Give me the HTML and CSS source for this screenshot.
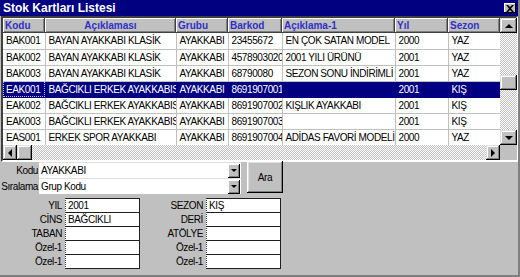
FILE: index.html
```html
<!DOCTYPE html>
<html lang="tr">
<head>
    <meta charset="UTF-8">
    <title>Stok Kartları Listesi</title>
    <link rel="stylesheet" href="styles.css">
</head>
<body>
<div class="window">
    <div class="titlebar">
        <span class="title">Stok Kartları Listesi</span>
        <span class="close">
            <svg width="8" height="7" viewBox="0 0 8 7"><path d="M0 0h2l2 2 2-2h2L5 3.5 8 7H6L4 5 2 7H0l3-3.5z" fill="#000"/></svg>
        </span>
    </div>

    <div class="gridpanel">
        <div class="tablewrap">
            <table class="grid">
                <colgroup>
                    <col class="c-kod"><col class="c-ack"><col class="c-grp"><col class="c-bar"><col class="c-ack1"><col class="c-yil"><col class="c-sez">
                </colgroup>
                <thead>
                    <tr>
                        <th>Kodu</th>
                        <th class="center">Açıklaması</th>
                        <th>Grubu</th>
                        <th>Barkod</th>
                        <th>Açıklama-1</th>
                        <th>Yıl</th>
                        <th>Sezon</th>
                    </tr>
                </thead>
                <tbody>
                    <tr><td>BAK001</td><td>BAYAN AYAKKABI KLASİK</td><td>AYAKKABI</td><td>23455672</td><td>EN ÇOK SATAN MODEL</td><td>2000</td><td>YAZ</td></tr>
                    <tr><td>BAK002</td><td>BAYAN AYAKKABI KLASİK</td><td>AYAKKABI</td><td>4578903020</td><td>2001 YILI ÜRÜNÜ</td><td>2001</td><td>YAZ</td></tr>
                    <tr><td>BAK003</td><td>BAYAN AYAKKABI KLASİK</td><td>AYAKKABI</td><td>68790080</td><td>SEZON SONU İNDİRİMLİ</td><td>2001</td><td>YAZ</td></tr>
                    <tr class="selected"><td class="focus">EAK001</td><td>BAĞCIKLI ERKEK AYAKKABISI</td><td>AYAKKABI</td><td>8691907001</td><td></td><td>2001</td><td>KIŞ</td></tr>
                    <tr><td>EAK002</td><td>BAĞCIKLI ERKEK AYAKKABISI</td><td>AYAKKABI</td><td>8691907002</td><td>KIŞLIK AYAKKABI</td><td>2001</td><td>KIŞ</td></tr>
                    <tr><td>EAK003</td><td>BAĞCIKLI ERKEK AYAKKABISI</td><td>AYAKKABI</td><td>8691907003</td><td></td><td>2001</td><td>KIŞ</td></tr>
                    <tr><td>EAS001</td><td>ERKEK SPOR AYAKKABI</td><td>AYAKKABI</td><td>8691907004</td><td>ADİDAS FAVORİ MODELİ</td><td>2000</td><td>YAZ</td></tr>
                </tbody>
            </table>
        </div>

        <div class="vscroll">
            <span class="sbtn"><i class="arrow up"></i></span>
            <span class="track vtrack"><span class="thumb vthumb"></span></span>
            <span class="sbtn"><i class="arrow down"></i></span>
        </div>
        <div class="hscroll">
            <span class="sbtn"><i class="arrow left"></i></span>
            <span class="thumb hthumb"></span>
            <span class="track htrack"></span>
            <span class="sbtn"><i class="arrow right"></i></span>
        </div>
        <div class="corner"></div>
    </div>

    <div class="search">
        <div class="search-rows">
            <div class="srow">
                <label>Kodu</label>
                <div class="combo"><span class="combo-text">AYAKKABI</span><span class="combo-btn"><i class="arrow down"></i></span></div>
            </div>
            <div class="srow">
                <label>Sıralama</label>
                <div class="combo"><span class="combo-text">Grup Kodu</span><span class="combo-btn"><i class="arrow down"></i></span></div>
            </div>
        </div>
        <button class="btn">Ara</button>
    </div>

    <div class="fields">
        <div class="fcol left">
            <div class="frow"><label>YIL</label><div class="edit">2001</div></div>
            <div class="frow"><label>CİNS</label><div class="edit">BAĞCIKLI</div></div>
            <div class="frow"><label>TABAN</label><div class="edit"></div></div>
            <div class="frow"><label>Özel-1</label><div class="edit"></div></div>
            <div class="frow"><label>Özel-1</label><div class="edit"></div></div>
        </div>
        <div class="fcol right">
            <div class="frow"><label>SEZON</label><div class="edit">KIŞ</div></div>
            <div class="frow"><label>DERİ</label><div class="edit"></div></div>
            <div class="frow"><label>ATÖLYE</label><div class="edit"></div></div>
            <div class="frow"><label>Özel-1</label><div class="edit"></div></div>
            <div class="frow"><label>Özel-1</label><div class="edit"></div></div>
        </div>
    </div>
</div>
</body>
</html>
```

FILE: styles.css
```css
body {
    margin: 0;
    font-family: "Liberation Sans", Arial, sans-serif;
    font-size: 10px;
    letter-spacing: -0.4px;
    color: #000;
    background: #c0c0c0;
}

.window {
    width: 520px;
    height: 277px;
    box-sizing: border-box;
    background: #c0c0c0;
    border-right: 2px solid #808080;
    border-bottom: 2px solid #808080;
    display: flex;
    flex-direction: column;
}

/* baslik cubugu */
.titlebar {
    height: 16px;
    background: #000080;
    color: #fff;
    display: flex;
    align-items: center;
    justify-content: space-between;
    padding: 0 2px 0 3px;
}

.title {
    font-weight: bold;
    font-size: 12px;
    letter-spacing: 0;
}

.close {
    width: 12px;
    height: 10px;
    background: #c0c0c0;
    box-shadow: inset -1px -1px #000, inset 1px 1px #fff;
    display: flex;
    align-items: center;
    justify-content: center;
}

/* tablo paneli */
.gridpanel {
    display: grid;
    grid-template-columns: 497px 17px;
    grid-template-rows: 127px 15px;
    border-style: solid;
    border-width: 2px;
    border-color: #404040 #fff #fff #404040;
    margin-left: 1px;
    background: #fff;
}

.tablewrap {
    overflow: hidden;
    background: #fff;
}

.grid {
    table-layout: fixed;
    border-collapse: collapse;
    width: 497px;
}

.c-kod { width: 42px; }
.c-ack { width: 131px; }
.c-grp { width: 52px; }
.c-bar { width: 54px; }
.c-ack1 { width: 113px; }
.c-yil { width: 53px; }
.c-sez { width: 52px; }

.grid th {
    height: 15px;
    box-sizing: border-box;
    padding: 0 2px;
    background: #c0c0c0;
    color: #3030c8;
    font-size: 10px;
    font-weight: bold;
    letter-spacing: 0;
    text-align: left;
    box-shadow: inset -1px -1px #404040, inset 1px 1px #fff, inset -2px -2px #808080;
    white-space: nowrap;
    overflow: hidden;
}

.grid th.center {
    text-align: center;
}

.grid td {
    height: 16px;
    box-sizing: border-box;
    padding: 0 3px;
    border-right: 1px solid #c0c0c0;
    border-bottom: 1px solid #c0c0c0;
    white-space: nowrap;
    overflow: hidden;
    text-overflow: clip;
}

.grid tr.selected td {
    background: #000080;
    color: #fff;
    border-color: #000080;
}

.grid tr.selected td.focus {
    outline: 1px dotted #c0c0ff;
    outline-offset: -1px;
}

/* kaydirma cubuklari */
.vscroll {
    display: flex;
    flex-direction: column;
    background: #c0c0c0;
}

.hscroll {
    display: flex;
    background: #c0c0c0;
}

.corner {
    background: #c0c0c0;
}

.sbtn {
    width: 15px;
    height: 15px;
    flex: none;
    background: #c0c0c0;
    box-shadow: inset -1px -1px #000, inset 1px 1px #dfdfdf, inset -2px -2px #808080, inset 2px 2px #fff;
    display: flex;
    align-items: center;
    justify-content: center;
}

.vscroll .sbtn {
    width: 17px;
}

.hscroll .sbtn {
    width: 14px;
}

.track {
    flex: 1;
    background: repeating-conic-gradient(#fff 0 25%, #c0c0c0 0 50%) 0 0 / 2px 2px;
    position: relative;
}

.thumb {
    background: #c0c0c0;
    box-shadow: inset -1px -1px #000, inset 1px 1px #dfdfdf, inset -2px -2px #808080, inset 2px 2px #fff;
}

.vthumb {
    position: absolute;
    left: 0;
    top: 42px;
    width: 17px;
    height: 15px;
}

.hthumb {
    width: 15px;
    flex: none;
}

.arrow {
    width: 0;
    height: 0;
    border: 4px solid transparent;
}

.arrow.up {
    border-bottom-color: #000;
    border-top-width: 0;
}

.arrow.down {
    border-top-color: #000;
    border-bottom-width: 0;
}

.arrow.left {
    border-right-color: #000;
    border-left-width: 0;
}

.arrow.right {
    border-left-color: #000;
    border-right-width: 0;
}

/* arama alani */
.search {
    display: flex;
    align-items: flex-start;
    gap: 6px;
}

.search-rows {
    display: flex;
    flex-direction: column;
}

.srow {
    display: flex;
    align-items: center;
    height: 16px;
}

.srow label {
    width: 38px;
    text-align: right;
    padding-right: 1px;
}

.combo {
    width: 202px;
    height: 16px;
    box-sizing: border-box;
    background: #fff;
    border-top: 1px solid #dfdfdf;
    display: flex;
    align-items: center;
}

.combo-text {
    flex: 1;
    padding-left: 2px;
}

.combo-btn {
    width: 12px;
    height: 14px;
    margin-right: 1px;
    background: #c0c0c0;
    box-shadow: inset -1px -1px #000, inset 1px 1px #fff, inset -2px -2px #808080;
    display: flex;
    align-items: center;
    justify-content: center;
}

.combo-btn .arrow {
    border-width: 3px;
    border-bottom-width: 0;
}

.btn {
    width: 36px;
    height: 32px;
    margin-top: -1px;
    padding: 0;
    border: none;
    background: #c0c0c0;
    font: inherit;
    letter-spacing: inherit;
    box-shadow: inset -1px -1px #000, inset 1px 1px #fff, inset -2px -2px #808080, inset 2px 2px #dfdfdf;
}

/* bilgi alanlari */
.fields {
    display: flex;
    margin-top: 4px;
}

.fcol {
    display: flex;
    flex-direction: column;
}

.frow {
    display: flex;
    align-items: center;
}

.frow + .frow {
    margin-top: -1px;
}

.fcol.left label {
    width: 62px;
}

.fcol.right label {
    width: 63px;
}

.frow label {
    text-align: right;
    padding-right: 3px;
}

.edit {
    width: 75px;
    height: 15px;
    box-sizing: border-box;
    background: #fff;
    border: 1px solid #202020;
    border-left: 1px dotted #404040;
    padding-left: 2px;
    line-height: 13px;
}
```
